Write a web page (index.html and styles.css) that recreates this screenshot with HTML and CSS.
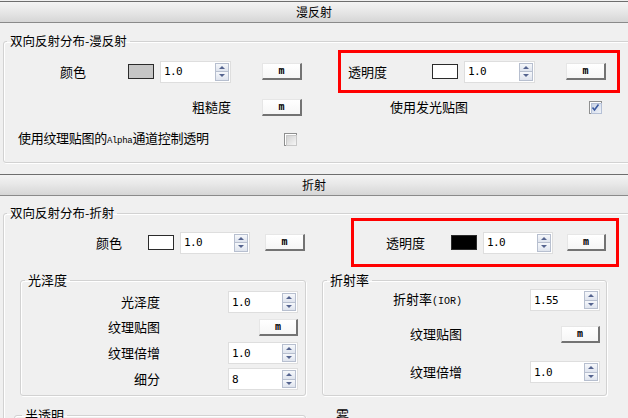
FILE: index.html
```html
<!DOCTYPE html>
<html>
<head>
<meta charset="utf-8">
<link rel="stylesheet" href="styles.css">
</head>
<body>
<div class="hdr">漫反射</div>
<fieldset class="grp g1">
  <legend>双向反射分布-漫反射</legend>
  <div class="row g1r1">
    <span class="lab g1-lc">颜色</span>
    <span class="sw gray"></span>
    <div class="spin w71 ml6"><span class="val">1.0</span><span class="arr"><i class="up"></i><i class="dn"></i></span></div>
    <span class="btn w40 ml31">m</span>
    <div class="row hl g1-hl">
      <span class="lab g1-lt">透明度</span>
      <span class="sw white"></span>
      <div class="spin w71 ml6"><span class="val">1.0</span><span class="arr"><i class="up"></i><i class="dn"></i></span></div>
      <span class="btn w40 ml31">m</span>
    </div>
  </div>
  <div class="row g1r2">
    <span class="lab g1-lr">粗糙度</span>
    <span class="btn w40 ml31">m</span>
    <span class="lab g1-lg">使用发光贴图</span>
    <span class="cb checked"><svg width="9" height="9" viewBox="0 0 9 9"><path d="M1.5 4.5 L3.5 7 L7.5 1.5" fill="none" stroke="#3b5aa0" stroke-width="1.6"/></svg></span>
  </div>
  <div class="row g1r3">
    <span class="lab g1-la">使用纹理贴图的<span class="mono sm">Alpha</span>通道控制透明</span>
    <span class="cb"></span>
  </div>
</fieldset>

<div class="hdr hdr2">折射</div>
<fieldset class="grp g2">
  <legend>双向反射分布-折射</legend>
  <div class="row g2r1">
    <span class="lab g2-lc">颜色</span>
    <span class="sw white"></span>
    <div class="spin w70 ml6"><span class="val">1.0</span><span class="arr"><i class="up"></i><i class="dn"></i></span></div>
    <span class="btn w40 ml15">m</span>
    <div class="row hl g2-hl">
      <span class="lab g2-lt">透明度</span>
      <span class="sw black"></span>
      <div class="spin w70 ml6"><span class="val">1.0</span><span class="arr"><i class="up"></i><i class="dn"></i></span></div>
      <span class="btn w39 ml14">m</span>
    </div>
  </div>

  <div class="subs">
    <fieldset class="sub sub-l">
      <legend>光泽度</legend>
      <div class="row srow la">
        <span class="lab slab">光泽度</span>
        <div class="spin w70 ml68"><span class="val">1.0</span><span class="arr"><i class="up"></i><i class="dn"></i></span></div>
      </div>
      <div class="row srow lb">
        <span class="lab slab">纹理贴图</span>
        <span class="btn w39 ml99">m</span>
      </div>
      <div class="row srow lc">
        <span class="lab slab">纹理倍增</span>
        <div class="spin w70 ml68"><span class="val">1.0</span><span class="arr"><i class="up"></i><i class="dn"></i></span></div>
      </div>
      <div class="row srow ld">
        <span class="lab slab">细分</span>
        <div class="spin w70 ml68"><span class="val">8</span><span class="arr"><i class="up"></i><i class="dn"></i></span></div>
      </div>
    </fieldset>
    <fieldset class="sub sub-r">
      <legend>折射率</legend>
      <div class="row srow ra">
        <span class="lab slab">折射率<span class="mono ior">(IOR)</span></span>
        <div class="spin w70 ml68"><span class="val">1.55</span><span class="arr"><i class="up"></i><i class="dn"></i></span></div>
      </div>
      <div class="row srow rb">
        <span class="lab slab">纹理贴图</span>
        <span class="btn w39 ml99">m</span>
      </div>
      <div class="row srow rc">
        <span class="lab slab">纹理倍增</span>
        <div class="spin w70 ml68"><span class="val">1.0</span><span class="arr"><i class="up"></i><i class="dn"></i></span></div>
      </div>
    </fieldset>
  </div>

  <div class="subs subs2">
    <fieldset class="sub sub-bl">
      <legend>半透明</legend>
      <div class="filler"></div>
    </fieldset>
    <fieldset class="sub sub-br">
      <legend>雾</legend>
      <div class="filler"></div>
    </fieldset>
  </div>
</fieldset>
</body>
</html>
```

FILE: styles.css
```css
* { box-sizing: border-box; }

html, body {
  margin: 0;
  width: 628px;
  height: 418px;
  overflow: hidden;
}

body {
  background: #f0f0f0;
  font-family: "Noto Sans CJK SC", "Noto Sans", sans-serif;
  font-size: 13px;
  color: #000;
}

.hdr {
  margin-top: 1px;
  height: 22px;
  border-top: 1px solid #6e6e6e;
  border-bottom: 1px solid #8a8a8a;
  background: linear-gradient(#f4f4f4, #e8e8e8 45%, #d6d6d6);
  text-align: center;
  font-size: 12px;
  line-height: 20px;
}

.hdr2 { margin-top: 11px; }

.grp {
  margin: 10px -24px 0 3px;
  padding: 0 0 12px 0;
  border: 1px solid #d2d2d2;
  border-radius: 3px;
  box-shadow: inset 1px 1px 0 #fff, 1px 1px 0 #fff;
  min-width: 0;
}

.g2 { margin-top: 9px; padding-bottom: 0; }

legend {
  margin-left: 3px;
  padding: 0 3px;
  line-height: 16px;
  font-size: 12.5px;
}

.row {
  display: flex;
  align-items: center;
}

.lab {
  display: block;
  white-space: nowrap;
  line-height: 16px;
}

.mono { font-family: "Liberation Mono", monospace; }
.sm { font-size: 9px; }
.ior { font-size: 10px; }

/* swatches */
.sw {
  width: 26px;
  height: 15px;
  border: 1px solid #2b2b2b;
  flex: none;
}
.gray { background: #c6c6c6; }
.white { background: #fff; }
.black { background: #000; }

/* spin box */
.spin {
  display: flex;
  align-items: center;
  height: 22px;
  background: #fff;
  border: 1px solid #dedede;
  padding-left: 3px;
  flex: none;
  font-family: "DejaVu Sans Mono", monospace;
  font-size: 11px;
  letter-spacing: -0.6px;
}
.spin .val { flex: 1; }
.arr {
  display: flex;
  flex-direction: column;
  width: 14px;
  height: 18px;
  margin-right: 1px;
}
.arr i {
  flex: 1;
  display: flex;
  align-items: center;
  justify-content: center;
  border: 1px solid #b7bfcf;
  background: linear-gradient(#f6f8fb, #dfe4ee);
}
.arr i + i { border-top: none; }
.arr i::after {
  content: "";
  width: 0;
  height: 0;
  border-left: 3px solid transparent;
  border-right: 3px solid transparent;
}
.arr .up::after { border-bottom: 3px solid #55648f; }
.arr .dn::after { border-top: 3px solid #55648f; }

/* button */
.btn {
  display: flex;
  align-items: center;
  justify-content: center;
  height: 17px;
  flex: none;
  background: linear-gradient(#ffffff, #f6f6f6);
  border-top: 1px solid #e6e6e6;
  border-left: 1px solid #e6e6e6;
  border-right: 2px solid #737373;
  border-bottom: 2px solid #737373;
  font-family: "DejaVu Sans Mono", monospace;
  font-weight: bold;
  font-size: 10px;
  line-height: 1;
}

/* checkbox */
.cb {
  width: 13px;
  height: 13px;
  flex: none;
  border: 1px solid #8e8f8f;
  background: #fff;
  padding: 1px;
  position: relative;
}
.cb::before {
  content: "";
  display: block;
  width: 100%;
  height: 100%;
  background: linear-gradient(135deg, #d2d2d2, #f6f6f6);
  border: 1px solid #c8c8c8;
}
.cb.checked::before { background: linear-gradient(135deg, #c9d3e6, #f0f3f8); border-color: #b5c0d6; }
.cb svg { position: absolute; left: 1px; top: 1px; }

/* widths / offsets */
.w71 { width: 71px; }
.w70 { width: 70px; }
.w40 { width: 40px; }
.w39 { width: 39px; }
.ml6 { margin-left: 6px; }
.ml14 { margin-left: 14px; }
.ml15 { margin-left: 15px; }
.ml31 { margin-left: 31px; }
.ml68 { margin-left: 68px; }
.ml99 { margin-left: 99px; }

.hl {
  border: 3px solid #ff0000;
  flex: none;
}

/* group 1 */
.g1r1 { margin-top: 1px; height: 43px; }
.g1-lc { margin-left: 56px; width: 68px; }
.g1-hl { margin-left: 36px; width: 282px; height: 43px; }
.g1-lt { margin-left: 7px; width: 84px; }

.g1r2 { margin-top: 3px; height: 22px; }
.g1-lr { margin-left: 96px; width: 131px; text-align: right; }
.g1-lg { margin-left: 88px; width: 199px; }

.g1r3 { margin-top: 10px; height: 22px; }
.g1-la { margin-left: 14px; width: 266px; letter-spacing: -0.3px; }

/* group 2 */
.g2r1 { margin-top: -3px; height: 49px; }
.g2-lc { margin-left: 92px; width: 52px; }
.g2-hl { margin-left: 46px; width: 268px; height: 49px; }
.g2-lt { margin-left: 32px; width: 65px; }

.subs {
  display: flex;
  margin-top: 5px;
}

.sub {
  margin: 0;
  padding: 0;
  border: 1px solid #d2d2d2;
  border-radius: 3px;
  box-shadow: inset 1px 1px 0 #fff, 1px 1px 0 #fff;
  min-width: 0;
  flex: none;
}
.sub legend { margin-left: 4px; font-size: 13px; }

.sub-l { margin-left: 16px; width: 286px; padding-bottom: 5px; }
.sub-r { margin-left: 16px; width: 285px; }

.srow { height: 22px; }
.slab { width: 139px; text-align: right; }

.la { margin-top: 3px; }
.lb { margin-top: 3px; }
.lc { margin-top: 4px; }
.ld { margin-top: 4px; }

.ra { margin-top: 1px; }
.rb { margin-top: 12px; }
.rc { margin-top: 16px; }

.subs2 { margin-top: 11px; }
.sub-bl { margin-left: 10px; width: 292px; }
.sub-bl legend { margin-left: 7px; }
.sub-br { margin-left: 20px; width: 285px; border-color: transparent; box-shadow: none; }
.sub-br legend { margin-left: 6px; }
.filler { height: 40px; }
```
